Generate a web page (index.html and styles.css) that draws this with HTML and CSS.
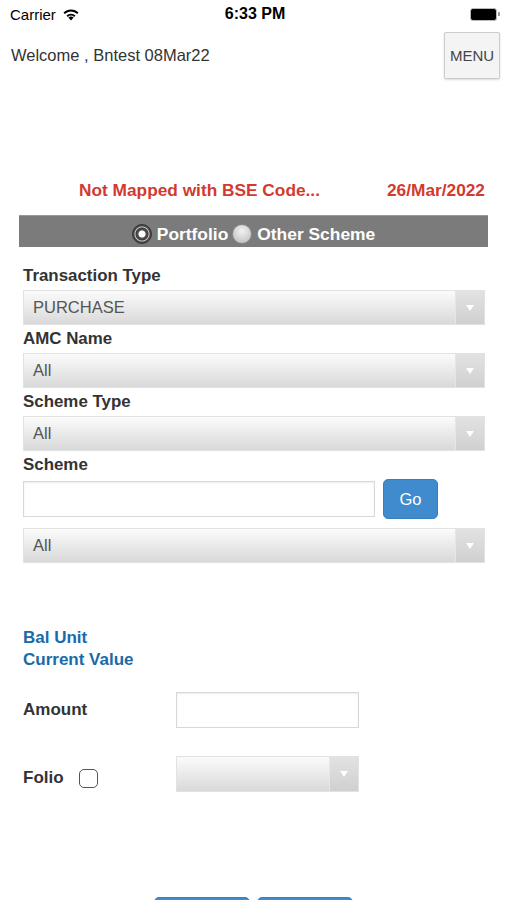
FILE: index.html
```html
<!DOCTYPE html>
<html lang="en">
<head>
    <meta charset="UTF-8">
    <meta name="viewport" content="width=device-width, initial-scale=1">
    <title>Transaction</title>
    <link rel="stylesheet" href="styles.css">
</head>
<body>
    <div class="statusbar">
        <div class="carrier">
            Carrier
            <svg class="wifi" width="18" height="13" viewBox="0 0 18 13">
                <path d="M9 12.5 L6.4 9.6 A3.8 3.8 0 0 1 11.6 9.6 Z" fill="#000"/>
                <path d="M4.5 7.6 A6.6 6.6 0 0 1 13.5 7.6 L12.2 9 A4.8 4.8 0 0 0 5.8 9 Z" fill="#000"/>
                <path d="M1.5 4.6 A10.6 10.6 0 0 1 16.5 4.6 L15.2 6 A8.7 8.7 0 0 0 2.8 6 Z" fill="#000"/>
            </svg>
        </div>
        <div class="clock">6:33 PM</div>
        <div class="battery"><span class="battery-body"></span><span class="battery-nub"></span></div>
    </div>

    <div class="header">
        <span class="welcome">Welcome , Bntest 08Mar22</span>
        <button class="menu-btn" type="button">MENU</button>
    </div>

    <div class="notice">
        <span>Not Mapped with BSE Code...</span>
        <span>26/Mar/2022</span>
    </div>

    <div class="source-bar">
        <label class="radio"><span class="radio-dot checked"></span>Portfolio</label>
        <label class="radio"><span class="radio-dot"></span>Other Scheme</label>
    </div>

    <form class="txn-form">
        <div class="field-label">Transaction Type</div>
        <div class="select-box"><span>PURCHASE</span><span class="select-arrow"></span></div>

        <div class="field-label">AMC Name</div>
        <div class="select-box"><span>All</span><span class="select-arrow"></span></div>

        <div class="field-label">Scheme Type</div>
        <div class="select-box"><span>All</span><span class="select-arrow"></span></div>

        <div class="field-label">Scheme</div>
        <div class="search-row">
            <input class="text-input search-input" type="text">
            <button class="blue-btn go-btn" type="button">Go</button>
        </div>
        <div class="select-box scheme-select"><span>All</span><span class="select-arrow"></span></div>

        <div class="balance">
            <div>Bal Unit</div>
            <div>Current Value</div>
        </div>

        <div class="pair-row amount-row">
            <div class="pair-label">Amount</div>
            <input class="text-input small-input" type="text">
        </div>

        <div class="pair-row folio-row">
            <div class="pair-label folio-label">Folio <span class="checkbox"></span></div>
            <div class="select-box small-select"><span></span><span class="select-arrow"></span></div>
        </div>

        <div class="actions">
            <button class="blue-btn action-btn" type="button" aria-label="Submit"></button>
            <button class="blue-btn action-btn" type="button" aria-label="Reset"></button>
        </div>
    </form>
</body>
</html>
```

FILE: styles.css
```css
body {
    margin: 0;
    font-family: "Liberation Sans", Arial, sans-serif;
    background: white;
    color: #333;
    overflow: hidden;
}

.statusbar {
    height: 28px;
    display: flex;
    align-items: center;
    justify-content: space-between;
    padding: 0 7px 0 10px;
    color: #000;
    font-size: 15px;
}

.carrier {
    display: flex;
    align-items: center;
    gap: 6px;
    width: 120px;
}

.clock {
    font-weight: bold;
    font-size: 16px;
}

.battery {
    width: 120px;
    display: flex;
    justify-content: flex-end;
    align-items: center;
}

.battery-body {
    width: 25px;
    height: 11px;
    background: #000;
    border-radius: 3px;
    border: 1px solid #bbb;
}

.battery-nub {
    width: 2px;
    height: 4px;
    background: #999;
    margin-left: 1px;
    border-radius: 0 1px 1px 0;
}

.header {
    display: flex;
    justify-content: space-between;
    align-items: center;
    padding: 4px 7px 0 11px;
}

.welcome {
    font-size: 16.5px;
    color: #333;
}

.menu-btn {
    width: 56px;
    height: 47px;
    background: #f4f4f4;
    border: 1px solid #ccc;
    border-radius: 2px;
    box-shadow: 0 1px 2px rgba(0, 0, 0, 0.15);
    font-family: inherit;
    font-size: 15px;
    color: #444;
    padding: 0;
}

.notice {
    display: flex;
    justify-content: space-between;
    margin-top: 101px;
    padding: 0 22px 0 79px;
    line-height: 20px;
    font-size: 17.3px;
    font-weight: bold;
    color: #d33a2f;
}

.source-bar {
    margin: 15px 19px 0 19px;
    height: 32px;
    background: #7b7b7b;
    border-top: 1px solid #999;
    box-sizing: border-box;
    display: flex;
    justify-content: center;
    align-items: center;
    gap: 4px;
    color: white;
    font-size: 17.4px;
    font-weight: bold;
    padding-top: 5px;
}

.radio {
    display: flex;
    align-items: center;
    gap: 5px;
}

.radio-dot {
    width: 20px;
    height: 20px;
    border-radius: 50%;
    background: radial-gradient(circle at 50% 35%, #f2f2f2, #b8b8b8);
    box-sizing: border-box;
    border: 1px solid #888;
}

.radio-dot.checked {
    background: radial-gradient(circle, #fff 0 3px, #555 4px, #3a3a3a 6px, #c9c9c9 7px, #4a4a4a 8px);
    border: 1px solid #333;
}

.txn-form {
    padding: 0 22px 0 23px;
    margin: 0;
}

.field-label {
    margin-top: 19px;
    line-height: 20px;
    font-size: 16.9px;
    font-weight: bold;
    color: #333;
}

.select-box + .field-label {
    margin-top: 4px;
}

.select-box {
    margin-top: 4px;
    height: 35px;
    box-sizing: border-box;
    border: 1px solid #e2e2e2;
    background: linear-gradient(#fbfbfb, #d9d9d9);
    display: flex;
    align-items: center;
    justify-content: space-between;
    font-size: 16.5px;
    color: #555;
    padding-left: 9px;
}

.select-arrow {
    width: 28px;
    height: 100%;
    border-left: 1px solid #e6e6e6;
    background: linear-gradient(#e2e2e2, #d0d0d0);
    position: relative;
}

.select-arrow::after {
    content: "";
    position: absolute;
    left: 10px;
    top: 14px;
    border-left: 4px solid transparent;
    border-right: 4px solid transparent;
    border-top: 6px solid #fff;
}

.search-row {
    display: flex;
    align-items: center;
    gap: 8px;
    margin-top: 4px;
}

.text-input {
    height: 36px;
    box-sizing: border-box;
    border: 1px solid #d8d8d8;
    box-shadow: inset 0 1px 2px rgba(0, 0, 0, 0.08);
    background: white;
    font-size: 16px;
    margin: 0;
}

.search-input {
    width: 352px;
}

.blue-btn {
    background: #3f8bcd;
    border: 1px solid #3a7fbd;
    border-radius: 5px;
    color: white;
    font-family: inherit;
    font-size: 16.5px;
}

.go-btn {
    width: 55px;
    height: 40px;
}

.scheme-select {
    margin-top: 9px;
}

.balance {
    margin-top: 64px;
    line-height: 22px;
    font-size: 17px;
    font-weight: bold;
    color: #1b6aa8;
}

.pair-row {
    display: flex;
    align-items: center;
}

.amount-row {
    margin-top: 21px;
}

.folio-row {
    margin-top: 28px;
}

.pair-label {
    width: 153px;
    font-size: 17px;
    font-weight: bold;
    color: #333;
}

.folio-label {
    display: flex;
    align-items: center;
    gap: 15px;
    padding-top: 8px;
}

.checkbox {
    width: 19px;
    height: 19px;
    box-sizing: border-box;
    border: 1.5px solid #555;
    border-radius: 5px;
    background: white;
}

.small-input {
    width: 183px;
    height: 36px;
}

.small-select {
    width: 183px;
    height: 36px;
    margin-top: 0;
}

.actions {
    display: flex;
    justify-content: center;
    gap: 7px;
    margin-top: 105px;
    margin-left: -23px;
    margin-right: -22px;
}

.action-btn {
    width: 96px;
    height: 40px;
}
```
